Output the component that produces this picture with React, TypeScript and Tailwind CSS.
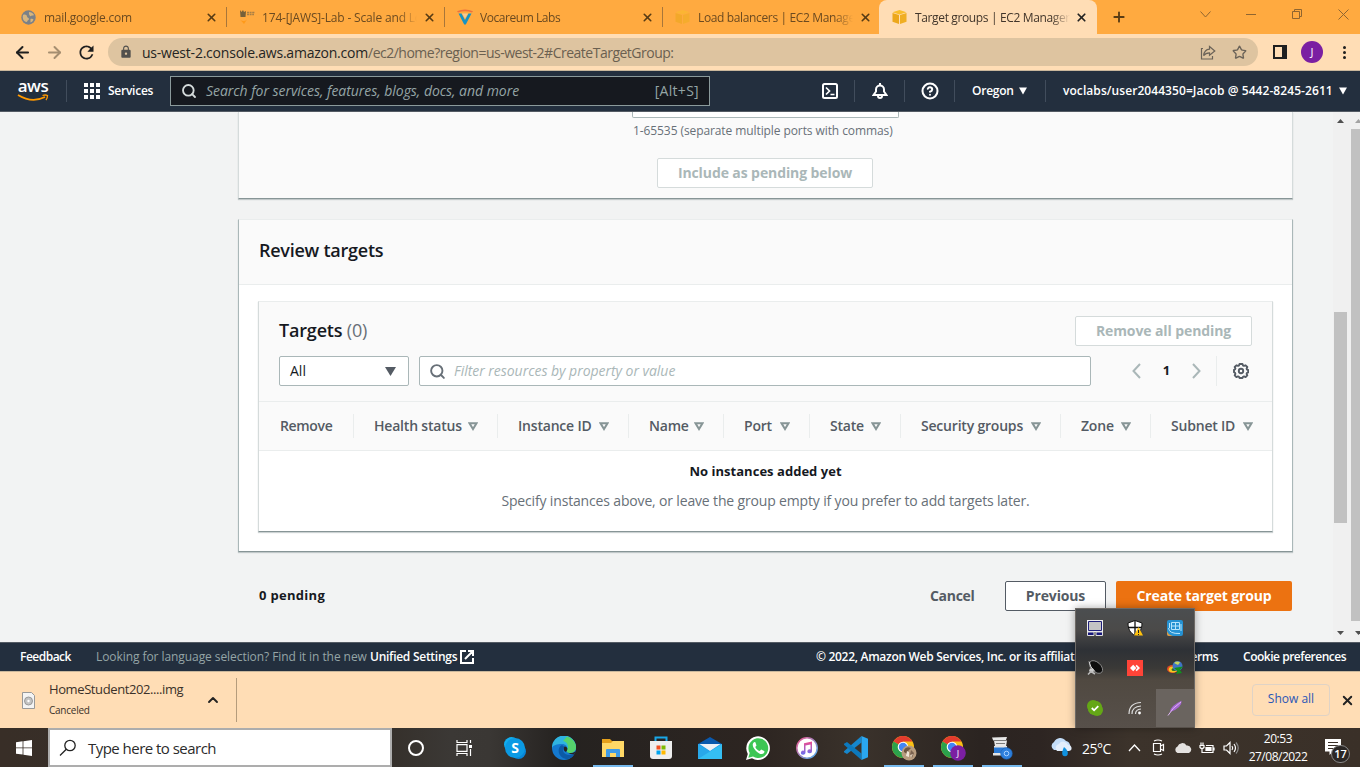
import React from "react";
import { ArrowLeft, ArrowRight, ChevronUp, CircleHelp, Plus, Search, Star, X } from "lucide-react";
import { MdLock, MdRefresh } from "react-icons/md";

const Cube = ({ faded = false }: { faded?: boolean }) => (
  <svg width="15" height="16" viewBox="0 0 15 16" className={faded ? "opacity-60" : ""}>
    <path d="M0.5 3.200 7.500 1l7 2.200-7 2.200z" fill="#f9bd2b" />
    <path d="M0.5 4 7 6v9L0.5 12.800z" fill="#eca71c" />
    <path d="M14.500 4 8 6v9l6.500-2.200z" fill="#f0ae22" />
  </svg>
);

const Globe = () => (
  <svg width="15" height="15" viewBox="0 0 15 15">
    <circle cx="7.500" cy="7.500" r="7.200" fill="#7c8187" />
    <path d="M2 5c2-1 4 0 4 1.500s2 1 2 2.500-2 1-2 3c-3 0-5-3-4-7z" fill="#d7b57e" />
    <path d="M8 2c2 0 4 1 5 3-1 1-2 0-3 1S7.500 4 8 2zM9.500 9c1-.6 2.500 0 3 .4-.6 1.500-1.600 2.600-3 3z" fill="#d7b57e" />
  </svg>
);

const Canvas = () => (
  <svg width="17" height="16" viewBox="0 0 17 16">
    <path d="M1 1l1.500 2L4 1l1 2 2-1-.5 6H1.500z" fill="#76603a" />
    <path d="M8 3.500h8M8 5.500h7" stroke="#a87f45" strokeWidth="1.400" strokeDasharray="2 .6" />
    <path d="M1 10.500q3.500 3 7 0L5 15z" fill="#ff9a1a" />
  </svg>
);

const VLogo = () => (
  <svg width="16" height="16" viewBox="0 0 16 16">
    <path d="M0 2.200q8-3.500 16 0l-1 1.300Q8 1 1 3.500z" fill="#f0703c" />
    <path d="M1.500 4.500h3L8 11l3.500-6.500h3L8.800 15.500H7.200z" fill="#1793c4" />
    <path d="M5 4.500h6L8 9.500z" fill="#f6c994" />
  </svg>
);

const tabs = [
  { title: "mail.google.com", icon: <Globe />, cls: "tracking-[-0.24px]" },
  { title: "174-[JAWS]-Lab - Scale and Lo", icon: <Canvas />, cls: "tracking-[-0.17px]" },
  { title: "Vocareum Labs", icon: <VLogo />, cls: "tracking-[-0.45px]" },
  { title: "Load balancers | EC2 Manage", icon: <Cube faded />, cls: "tracking-[-0.36px]" },
];

function TabStrip() {
  return (
    <div className="flex h-[34px] w-full bg-[#ffaa40] pl-[9px]">
      {tabs.map((t) => (
        <div key={t.title} className="flex h-[34px] w-[218px] items-center pl-3">
          <span className="flex w-[23px] shrink-0">{t.icon}</span>
          <span className="w-[155px] overflow-hidden whitespace-nowrap pt-px text-[12px] text-[#6b4a20] [mask-image:linear-gradient(to_right,black_88%,transparent)]">
            <span className={t.cls}>{t.title}</span>
          </span>
          <span className="flex w-[27px] justify-center pr-[3px]">
            <X size={13} strokeWidth={3} className="text-[#573b14]" />
          </span>
          <span className="h-5 w-px shrink-0 bg-[#a8763a]" />
        </div>
      ))}
      <div className="-ml-[2px] flex h-[34px] w-[218px] items-center rounded-t-lg bg-[#ffddb5] pl-[13px]">
        <span className="flex w-[23px] shrink-0"><Cube /></span>
        <span className="w-[155px] overflow-hidden whitespace-nowrap pt-px text-[12px] tracking-[-0.36px] text-[#41352a] [mask-image:linear-gradient(to_right,black_88%,transparent)]">
          Target groups | EC2 Manager
        </span>
        <span className="flex w-[22px] justify-center"><X size={13} strokeWidth={3.2} className="text-[#222]" /></span>
      </div>
      <span className="flex w-[43px] items-center justify-center"><Plus size={16} strokeWidth={2.8} className="text-[#5a3c14]" /></span>
      <div className="flex h-7 flex-1 items-center justify-end text-[#8f6530]">
        <span className="flex w-[46px] justify-center">
          <svg width="11" height="7" viewBox="0 0 11 7" fill="none" stroke="currentColor"><path d="M.5.5l5 5.500 5-5.500" /></svg>
        </span>
        <span className="flex w-[46px] justify-center"><span className="h-px w-[10px] bg-current" /></span>
        <span className="flex w-[46px] justify-center">
          <svg width="10" height="10" viewBox="0 0 10 10" fill="none" stroke="currentColor"><path d="M.5 2.500h7v7h-7zM2.500 2.500v-2h7v7h-2" /></svg>
        </span>
        <span className="flex w-[40px] justify-center pl-[6px]">
          <svg width="11" height="11" viewBox="0 0 11 11" stroke="currentColor"><path d="M.5.5l10 10M10.500.5l-10 10" /></svg>
        </span>
      </div>
    </div>
  );
}

function AddressBar() {
  return (
    <div className="flex h-[37px] w-full items-center border-b border-[#c9b79c] bg-[#ffddb5]">
      <span className="flex w-[44px] justify-center"><ArrowLeft size={19} strokeWidth={2.5} className="text-[#1f1f1f]" /></span>
      <span className="flex w-[20px] justify-center"><ArrowRight size={19} strokeWidth={2.5} className="shrink-0 text-[#a58e70]" /></span>
      <span className="flex w-[44px] justify-center"><MdRefresh size={21} className="text-[#1f1f1f]" /></span>
      <div className="flex h-7 w-[1150px] items-center rounded-full bg-[#dec4a0] pl-[11px]">
        <MdLock size={14} className="text-[#52504d]" />
        <span className="ml-[9px] flex-1 whitespace-nowrap text-[14px] tracking-[-0.22px] text-[#252423]">
          us-west-2.console.aws.amazon.com<span className="tracking-[-0.5px] text-[#6b6050]">/ec2/home?region=us-west-2#CreateTargetGroup:</span>
        </span>
        <svg width="16" height="15" viewBox="0 0 16 15" fill="none" stroke="#6b6358" strokeWidth="1.200">
          <path d="M3 3.500H1.500V14h11v-3M9.500 1.500 14.800 6l-5.300 4.300V7.800C7 7.800 5 8.600 3.600 10.600 4 7.500 6 4.500 9.500 4.200z" />
        </svg>
        <Star size={15} strokeWidth={2.2} className="ml-[16px] mr-[11px] text-[#6b6358]" />
      </div>
      <svg width="14" height="14" viewBox="0 0 14 14" className="ml-[15px]"><path d="M1 1h12v12H1z" fill="none" stroke="#1f1f1f" strokeWidth="2" /><path d="M9 1h4v12H9z" fill="#1f1f1f" /></svg>
      <span className="ml-[14px] flex h-[22px] w-[22px] items-center justify-center rounded-full bg-[#7b1fa2] text-[11px] text-white">J</span>
      <span className="ml-5 flex flex-col gap-[2px]">
        <i className="h-[3px] w-[3px] rounded-full bg-[#1f1f1f]" /><i className="h-[3px] w-[3px] rounded-full bg-[#1f1f1f]" /><i className="h-[3px] w-[3px] rounded-full bg-[#1f1f1f]" />
      </span>
    </div>
  );
}

const Sep = () => <span className="h-[22px] w-px shrink-0 bg-[#414d5c]" />;

const Caret = () => <svg width="8" height="8" viewBox="0 0 8 8"><path d="M0 .5h8L4 7.500z" fill="#fff" /></svg>;

function AwsNav() {
  return (
    <div className="flex h-[41px] w-full items-center border-b border-[#545b64] bg-[#232f3e] text-[12px] font-semibold text-white">
      <div className="flex w-[66px] flex-col items-center">
        <span className="h-[13px] text-[17px] font-semibold leading-[10px] tracking-[-0.5px]">aws</span>
        <svg width="32" height="8" viewBox="0 0 32 8" fill="none">
          <path d="M1 1q14 8.500 27 2" stroke="#f90" strokeWidth="1.800" />
          <path d="M25.500 1.500q3-1 5 0 0 2.500-1.500 4.500" stroke="#f90" strokeWidth="1.300" />
        </svg>
      </div>
      <Sep />
      <svg width="16" height="16" viewBox="0 0 16 16" fill="#fff" className="ml-[17px]">
        {[0, 6, 12].map((y) => [0, 6, 12].map((x) => <rect key={`${x}-${y}`} x={x} y={y} width="4" height="4" />))}
      </svg>
      <span className="ml-2 w-[62px] whitespace-nowrap tracking-[-0.25px]">Services</span>
      <div className="flex h-[30px] w-[540px] items-center border border-[#8b9a9b] bg-[#16191f] px-[10px] font-normal text-[#95a5a6]">
        <Search size={16} strokeWidth={2.8} className="text-[#d5dbdb]" />
        <span className="ml-[9px] flex-1 whitespace-nowrap pb-px text-[14px] italic tracking-[-0.04px]">Search for services, features, blogs, docs, and more</span>
        <span className="pb-px text-[14px] tracking-[0.3px]">[Alt+S]</span>
      </div>
      <span className="flex w-[144px] pl-[112px]">
        <svg width="16" height="16" viewBox="0 0 16 16" fill="none" stroke="#fff" strokeWidth="2"><rect x="1" y="1" width="14" height="14" rx="1.500" /><path d="M4 4.500 7.500 8 4 11.500M8.500 11.500h4" strokeWidth="1.700" /></svg>
      </span>
      <Sep />
      <span className="flex w-[49px] justify-center">
        <svg width="16" height="16" viewBox="0 0 16 16" fill="none" stroke="#fff" strokeWidth="2"><path d="M8 0v2M1.500 12h13L12 8.500V6.500a4 4 0 0 0-8 0v2zM6 13a2 2 0 0 0 4 0" /></svg>
      </span>
      <Sep />
      <span className="flex w-[49px] justify-center"><CircleHelp size={18} strokeWidth={2.7} /></span>
      <Sep />
      <span className="ml-[17px] flex w-[73px] items-center"><span className="w-[47px] tracking-[-0.25px]">Oregon</span><Caret /></span>
      <Sep />
      <span className="ml-[17px] flex items-center"><span className="w-[276px] whitespace-nowrap tracking-[0.07px]">voclabs/user2044350=Jacob @ 5442-8245-2611</span><Caret /></span>
    </div>
  );
}

const columns = ["Health status", "Instance ID", "Name", "Port", "State", "Security groups", "Zone", "Subnet ID"];

function Gear() {
  return (
    <svg width="16" height="16" viewBox="0 0 16 16" fill="none" stroke="#545b64" className="ml-[16px]">
      <path d="M6.500 1h3l.5 1.500 1 .4 1.600-.6 1.700 1.700-.7 1.600.4 1 1.200.4v2.400l-1.200.4-.4 1 .7 1.600-1.700 1.700-1.600-.7-1 .4L9.500 15h-3L6 13.800l-1-.4-1.600.7-1.700-1.700.7-1.600-.4-1L1 9.200V6.800l1-.4.4-1L1.700 4l1.700-1.700 1.600.6 1-.4z" strokeWidth="1.900" strokeLinejoin="round" />
      <circle cx="8" cy="8" r="2.200" strokeWidth="1.900" />
    </svg>
  );
}

function TargetsTable() {
  return (
    <div className="mx-[19px] mt-4 flex h-[231px] flex-col border border-[#d5dbdb] border-t-[#eaeded] border-b-[#879596] bg-white shadow-[0_1px_1px_rgba(0,28,36,0.2)]">
      <div className="h-[100px] border-b border-[#eaeded] bg-[#fafafa] px-5 pt-[14px]">
        <div className="flex h-[30px] items-center justify-between">
          <h3 className="pb-px text-[18px] font-semibold tracking-[-0.18px] text-[#16191f]">Targets <span className="font-normal text-[#687078]">(0)</span></h3>
          <button className="h-[30px] w-[177px] rounded-[2px] border border-[#d5dbdb] bg-white pb-[2px] text-[14px] font-bold tracking-[-0.1px] text-[#aab7b8]">Remove all pending</button>
        </div>
        <div className="mt-[10px] flex h-[30px] items-center">
          <div className="flex h-[30px] w-[130px] items-center justify-between rounded-[2px] border border-[#aab7b8] bg-white pl-[10px] pr-[12px] text-[14px] text-[#16191f]">
            <span className="pb-[2px]">All</span>
            <svg width="11" height="9" viewBox="0 0 11 9"><path d="M0 0h11L5.500 9z" fill="#545b64" /></svg>
          </div>
          <div className="ml-[10px] flex h-[30px] w-[672px] items-center rounded-[2px] border border-[#aab7b8] bg-white pl-[9px]">
            <Search size={17} strokeWidth={2.7} className="text-[#687078]" />
            <span className="ml-2 whitespace-nowrap pb-[2px] text-[14px] italic tracking-[-0.03px] text-[#aab7b8]">Filter resources by property or value</span>
          </div>
          <svg width="9" height="16" viewBox="0 0 9 16" fill="none" stroke="#aab7b8" strokeWidth="2" className="ml-[41px]"><path d="M8 1 1.500 8 8 15" /></svg>
          <span className="w-[51px] text-center text-[13px] font-bold text-[#16191f]">1</span>
          <svg width="9" height="16" viewBox="0 0 9 16" fill="none" stroke="#aab7b8" strokeWidth="2"><path d="M1 1 7.500 8 1 15" /></svg>
          <span className="ml-[15px] h-[30px] w-px bg-[#eaeded]" />
          <Gear />
        </div>
      </div>
      <div className="grid h-[49px] grid-cols-[95px_144px_131px_95px_86px_91px_160px_90px_121px] items-center border-b border-[#eaeded] bg-[#fafafa] text-[14px] font-semibold tracking-[-0.2px] text-[#545b64]">
        <span className="flex h-6 items-center border-r border-[#eaeded] pl-[21px]"><span className="pb-[2px] tracking-[-0.35px]">Remove</span></span>
        {columns.map((c) => (
          <span key={c} className="flex h-6 items-center justify-between whitespace-nowrap border-r border-[#eaeded] pl-5 pr-[19px] last:border-r-0">
            <span className="pb-[2px]">{c}</span>
            <svg width="10" height="9" viewBox="0 0 10 9" fill="none" stroke="#879596" strokeWidth="2"><path d="M1.500 1.200h7L5 7z" /></svg>
          </span>
        ))}
      </div>
      <div className="flex flex-1 flex-col items-center pt-[10px] text-[14px]">
        <b className="h-[30px] text-[13px] font-bold leading-5 tracking-[0.03px] text-[#16191f]">No instances added yet</b>
        <p className="whitespace-nowrap leading-5 tracking-[-0.16px] text-[#687078]">Specify instances above, or leave the group empty if you prefer to add targets later.</p>
      </div>
    </div>
  );
}

const Arrow = ({ down = false, color }: { down?: boolean; color: string }) => (
  <svg width="7" height="4" viewBox="0 0 7 4" className={down ? "rotate-180" : ""}><path d="M0 4 3.500 0 7 4z" fill={color} /></svg>
);

function Content() {
  return (
    <div className="flex h-[530px] w-full bg-[#f2f3f3]">
      <main className="w-[1333px] pl-[238px]">
        <section className="flex h-[87px] w-[1055px] flex-col border border-t-0 border-[#d5dbdb] border-b-[#879596] bg-[#fafafa] pl-[393px] shadow-[0_1px_1px_rgba(0,28,36,0.2)]">
          <div className="h-[6px] w-[267px] shrink-0 rounded-b-[2px] border border-t-0 border-[#aab7b8] bg-white" />
          <p className="mt-[4px] h-[18px] whitespace-nowrap pl-px text-[12px] leading-[18px] tracking-[-0.09px] text-[#687078]">1-65535 (separate multiple ports with commas)</p>
          <button className="ml-[25px] mt-[18px] h-[30px] w-[216px] shrink-0 rounded-[2px] border border-[#d5dbdb] bg-white pb-[2px] text-[14px] font-bold tracking-[-0.1px] text-[#aab7b8]">Include as pending below</button>
        </section>
        <section className="mt-5 h-[333px] w-[1055px] border border-[#aab7b8] border-t-[#eaeded] border-b-[#879596] bg-white shadow-[0_1px_1px_rgba(0,28,36,0.2)]">
          <h2 className="flex h-[65px] items-center border-b border-[#eaeded] bg-[#fafafa] pb-[4px] pl-5 text-[18px] font-semibold tracking-[-0.25px] text-[#16191f]">Review targets</h2>
          <TargetsTable />
        </section>
        <div className="mt-[29px] flex h-[30px] w-[1054px] items-center text-[14px] font-bold tracking-[-0.15px] text-[#545b64]">
          <span className="flex-1 pl-[21px] text-[13px] tracking-[0.3px] text-[#16191f]">0 pending</span>
          <span className="w-[75px] pb-[2px] tracking-[-0.3px]">Cancel</span>
          <button className="h-[30px] w-[101px] rounded-[2px] border border-[#545b64] bg-white pb-[2px]">Previous</button>
          <button className="ml-[10px] h-[30px] w-[176px] rounded-[2px] bg-[#ec7211] pb-[2px] text-white">Create target group</button>
        </div>
      </main>
      <div className="flex w-[15px] flex-col items-center bg-[#f0f0f0] pt-[7px]">
        <Arrow color="#505050" />
        <div className="mt-[189px] h-[211px] w-[13px] bg-[#c1c1c1]" />
        <div className="mt-[108px]"><Arrow down color="#505050" /></div>
      </div>
      <div className="flex w-[12px] flex-col items-end overflow-hidden bg-[#f0f0f0] pt-[7px]">
        <div className="-mr-[2px]"><Arrow color="#a3a3a3" /></div>
        <div className="mt-[6px] h-[492px] w-[9px] shrink-0 bg-[#c1c1c1]" />
        <div className="-mr-[2px] mt-[10px]"><Arrow down color="#505050" /></div>
      </div>
    </div>
  );
}

function Footer() {
  return (
    <div className="flex h-[29px] w-full items-center border-t border-[#545b64] bg-[#232f3e] pl-5 text-[12px] font-semibold text-white">
      <span className="w-[76px] tracking-[-0.5px]">Feedback</span>
      <span className="w-[274px] whitespace-nowrap font-normal tracking-[-0.07px] text-[#95a5a6]">Looking for language selection? Find it in the new</span>
      <span className="w-[90px] whitespace-nowrap tracking-[-0.27px]">Unified Settings</span>
      <svg width="14" height="14" viewBox="0 0 14 14" fill="none" stroke="#fff" strokeWidth="2"><path d="M6 1H1v12h12V8M8 1h5v5M13 1 5 9" /></svg>
      <span className="ml-[342px] w-[368px] whitespace-nowrap tracking-[-0.3px]">© 2022, Amazon Web Services, Inc. or its affiliates.</span>
      <span className="w-[59px] tracking-[-0.4px]">Terms</span>
      <span className="whitespace-nowrap tracking-[-0.48px]">Cookie preferences</span>
    </div>
  );
}

function Downloads() {
  return (
    <div className="flex h-[57px] w-full items-center border-t border-[#c9b79c] bg-[#ffddb5] pl-[22px]">
      <svg width="13" height="17" viewBox="0 0 13 17"><path d="M.5.5h9l3 3v13H.5z" fill="#f4f4f4" stroke="#999" /><circle cx="6.500" cy="9" r="4" fill="#c4c4c4" stroke="#999" /><circle cx="6.500" cy="9" r="1.200" fill="#fff" /></svg>
      <div className="ml-[14px] flex w-[152px] flex-col">
        <span className="h-[20px] whitespace-nowrap text-[13px] leading-[18px] tracking-[-0.4px] text-[#3b3129]">HomeStudent202....img</span>
        <span className="text-[10px] leading-[20px] tracking-[-0.25px] text-[#3b3129]">Canceled</span>
      </div>
      <ChevronUp size={16} strokeWidth={2.8} className="ml-[4px] text-[#222]" />
      <span className="ml-[15px] h-[44px] w-px bg-[#b59c7c]" />
      <span className="ml-auto flex h-[32px] w-[78px] items-center justify-center rounded-[4px] border border-[#dfd3c6] pb-[2px] text-[12px] text-[#2a56b5]">Show all</span>
      <X size={15} strokeWidth={3} className="ml-[10px] mr-[5px] text-[#222]" />
    </div>
  );
}

const Chrome = ({ badge }: { badge: React.ReactNode }) => (
  <svg width="26" height="26" viewBox="0 0 26 26">
    <circle cx="12" cy="12" r="11" fill="#fbc116" />
    <path d="M12 12 2.500 6.500A11 11 0 0 1 21.500 6.500H12z" fill="#e33b2e" />
    <path d="M2.500 6.500A11 11 0 0 0 12 23l5-8.500-5-2.500z" fill="#2ba24c" />
    <circle cx="12" cy="12" r="5.300" fill="#fff" /><circle cx="12" cy="12" r="4.200" fill="#4285f4" />
    {badge}
  </svg>
);

const apps: { name: string; open?: boolean; icon: React.ReactNode }[] = [
  { name: "skype", icon: (
    <svg width="24" height="24" viewBox="0 0 24 24"><circle cx="8.500" cy="8.500" r="7.500" fill="#12aef0" /><circle cx="15.500" cy="15.500" r="7.500" fill="#0786d8" /><circle cx="12" cy="12" r="10" fill="#0b9ae4" /><text x="12" y="17" textAnchor="middle" fontSize="14" fontWeight="700" fill="#fff">S</text></svg>
  ) },
  { name: "edge", icon: (
    <svg width="24" height="24" viewBox="0 0 24 24">
      <circle cx="12" cy="12" r="12" fill="#1479cf" />
      <path d="M0 12A12 12 0 0 1 24 11c0 4-3 6-6 6s-4-1.500-3-3 0-6-5-6C5 8 1 9 0 12z" fill="#2fb4e0" />
      <path d="M15 .5c5 1.500 9 5.500 9 10.500 0 4-3 6-6 6s-4-1.500-3-3c2-3 1-8-4-9z" fill="#55d36c" />
      <path d="M10 9c-5 2-5 12 4 14 4 0 7-2 8-5-4 2-10 1-11-3-.4-2 .5-3 1.500-4z" fill="#0c5aa6" />
      <path d="M12.500 10.500c-1.500 2-1 4.500 1.500 5.500l1.200-2c.8-2-.7-3.500-2.700-3.500z" fill="#26211f" />
      <path d="M15.500 16.500q4 1.500 8-1l-1.300 3q-4 0-6.700-2z" fill="#26211f" />
    </svg>
  ) },
  { name: "explorer", open: true, icon: (
    <svg width="22" height="20" viewBox="0 0 22 20"><path d="M0 1h8l2 2h12v4H0z" fill="#e5a01b" /><path d="M0 5h9l2-2h11v16H0z" fill="#ffd866" /><path d="M4 19v-7a1 1 0 0 1 1-1h12a1 1 0 0 1 1 1v7h-4v-4H8v4z" fill="#3f9be6" /></svg>
  ) },
  { name: "store", icon: (
    <svg width="24" height="24" viewBox="0 0 24 24"><path d="M6.500 6V1.500h11V6" fill="none" stroke="#19a7e8" strokeWidth="2" /><path d="M1 5h22v15q0 3-3 3H4q-3 0-3-3z" fill="#eee" /><path d="M7.500 9.500h4v4h-4z" fill="#f25022" /><path d="M12.500 9.500h4v4h-4z" fill="#7fba00" /><path d="M7.500 14.500h4v4h-4z" fill="#00a4ef" /><path d="M12.500 14.500h4v4h-4z" fill="#ffb900" /></svg>
  ) },
  { name: "mail", icon: (
    <svg width="24" height="22" viewBox="0 0 24 22"><path d="M0 7 12 0l12 7z" fill="#0a59ad" /><path d="M0 7h24v15H0z" fill="#1e9ae8" /><path d="M1.500 7h21L12 14z" fill="#eef1f6" /><path d="M0 7l12 7.500L24 7v15H0z" fill="#28a8ea" /><path d="M24 7 0 22h24z" fill="#35bff3" /></svg>
  ) },
  { name: "whatsapp", icon: (
    <svg width="24" height="24" viewBox="0 0 24 24"><path d="M0 24l1.800-6A11.800 11.800 0 1 1 6 22.300z" fill="#fff" /><path d="M2.300 21.800 3.700 17A9.900 9.900 0 1 1 7 20.500z" fill="#3dc654" /><path d="M8.500 6c-3 1.500-2 5.500 1.500 9s7 4.300 8.500 1l-.3-1-3-1.400-1.500 1.500c-2-.7-3.500-2.200-4.400-4.200L10.500 9.500 9.400 6.300z" fill="#fff" /></svg>
  ) },
  { name: "itunes", icon: (
    <svg width="22" height="22" viewBox="0 0 22 22">
      <defs><linearGradient id="tune" x1="0" y1="0" x2="0" y2="1"><stop offset="0" stopColor="#ef4b8e" /><stop offset="1" stopColor="#6a6ff0" /></linearGradient><linearGradient id="ring" x1="0" y1="0" x2="1" y2="1"><stop offset="0" stopColor="#f2588f" /><stop offset="1" stopColor="#4fb4f4" /></linearGradient></defs>
      <circle cx="11" cy="11" r="10.200" fill="#fff" stroke="url(#ring)" strokeWidth="1.500" />
      <path d="M8 6.200 16 4.500v9.700a2.300 2 0 1 1-1.500-1.800V7.500L9.500 8.600v7a2.300 2 0 1 1-1.500-1.800z" fill="url(#tune)" />
    </svg>
  ) },
  { name: "vscode", icon: (
    <svg width="24" height="24" viewBox="0 0 24 24"><path d="M17.500 0v6.500L3 18 0 16.300v-1z" fill="#1687cd" /><path d="M17.500 24v-6.500L3 6 0 7.700v1z" fill="#0d79bd" /><path d="M17.500 0 24 2.800v18.400L17.500 24z" fill="#2aa7f0" /></svg>
  ) },
  { name: "chrome", open: true, icon: <Chrome badge={<g><circle cx="18" cy="18" r="7.500" fill="#b79c7f" /><path d="M13 15q2-4 7-2l-3 3 1 2-2 1-3-2z" fill="#6d5540" /><path d="M16 16l2 1v5l-3-1z" fill="#efe5d6" /><path d="M20 15l3 3-2 5-2-3z" fill="#7a6250" /><path d="M19 20l3-1-2 4z" fill="#d8c7b3" /></g>} /> },
  { name: "chrome-j", open: true, icon: <Chrome badge={<g><circle cx="18" cy="18" r="7.800" fill="#7b1fa2" /><text x="18" y="21.500" textAnchor="middle" fontSize="9" fill="#fff">J</text></g>} /> },
  { name: "installer", open: true, icon: (
    <svg width="22" height="24" viewBox="0 0 22 24"><path d="M1 1.500 16 1l-1 3H2zM3 4.500h13l-1 6H4z" fill="#e8e8e8" /><path d="M2 4.500h13M5 7.500h9" stroke="#7b7b7b" /><path d="M3 10h13l1 8H3z" fill="#2a7ad6" /><path d="M3 10h13v1.500H3zM2 17h13v2.500H2z" fill="#e4e4e4" /><circle cx="15.500" cy="17.500" r="5.800" fill="#2d7fdc" stroke="#1c5fae" strokeWidth=".6" /><circle cx="15.500" cy="17.500" r="2.300" fill="none" stroke="#a9d1ff" /></svg>
  ) },
];

function Taskbar() {
  return (
    <div className="flex h-[39px] w-full items-center bg-[linear-gradient(to_right,#382e27_0px,#35302b_390px,#3b3835_450px,#3a3734_490px,#252220_560px,#2d2521_760px,#3a322b_860px,#2b2421_980px,#2d2522_1040px,#3c332b_1130px,#3a3028_1360px)] text-white">
      <span className="flex w-[48px] justify-center">
        <svg width="16" height="16" viewBox="0 0 16 16" fill="#fff"><path d="M0 2.200 6.600 1.300v6.200H0zM7.400 1.200 16 0v7.500H7.400zM0 8.300h6.600v6.300L0 13.700zM7.400 8.300H16V16l-8.600-1.300z" /></svg>
      </span>
      <div className="flex h-[39px] w-[344px] items-center border-2 border-[#adadad] bg-white pl-[9px]">
        <svg width="18" height="18" viewBox="0 0 18 18" fill="none" stroke="#222" strokeWidth="1.300"><circle cx="11" cy="6.500" r="5.200" /><path d="M7.300 10.300 1 16.500" /></svg>
        <span className="ml-[11px] whitespace-nowrap pt-[2px] text-[15px] tracking-[-0.53px] text-[#2b2b2b]">Type here to search</span>
      </div>
      <span className="flex w-[48px] justify-center"><span className="h-4 w-4 rounded-full border-2 border-white" /></span>
      <span className="flex w-[48px] justify-center">
        <svg width="17" height="16" viewBox="0 0 17 16" fill="none" stroke="#fff" strokeWidth="1.200"><path d="M1 0v2.500h10V0M1 16v-2.500h10V16M1 4.600h10v6.800H1zM14.500 0v3M14.500 9v7" /><path d="M13 5h3v3h-3z" fill="#fff" stroke="none" /></svg>
      </span>
      <div className="ml-[3px] grid h-[39px] w-[535px] grid-cols-11">
        {apps.map((a) => (
          <span key={a.name} className="flex flex-col items-center">
            <span className="flex h-[37px] items-center pt-[3px]">{a.icon}</span>
            {a.open && <span className="h-[2px] w-10 bg-[#76b9ed]" />}
          </span>
        ))}
      </div>
      <svg width="24" height="22" viewBox="0 0 24 22" className="ml-[23px]"><path d="M5 13a4.500 4.500 0 0 1 0-8 7 7 0 0 1 12-1 5 5 0 0 1 2 9z" fill="#c3ddf8" /><path d="M8 14a4 4 0 0 1 2-7 5 5 0 0 1 9 1 3 3 0 0 1 1 6z" fill="#e3eefb" /><path d="M15 10q5 4 3.500 8a3 3 0 0 1-5 0q-1-3 1.500-8z" fill="#0f91df" /></svg>
      <span className="ml-[9px] w-[46px] whitespace-nowrap pt-px text-[14px] tracking-[-0.5px]">25°C</span>
      <svg width="13" height="8" viewBox="0 0 13 8" fill="none" stroke="#fff" strokeWidth="1.300"><path d="M1 7l5.500-6L12 7" /></svg>
      <svg width="14" height="17" viewBox="0 0 14 17" fill="none" stroke="#fff" strokeWidth="1.200" className="ml-[11px]"><path d="M1.500 4.500h7v8h-7zM8.500 7l3-1.500v6L8.500 10M2 2q4-2 8 0M2 15q4 2 8 0" /></svg>
      <svg width="18" height="12" viewBox="0 0 18 12" className="ml-[8px]"><path d="M3.500 11a3.500 3.500 0 0 1 0-6.500 5 5 0 0 1 9-1A4 4 0 0 1 15 11z" fill="#e4e2e0" /></svg>
      <svg width="16" height="12" viewBox="0 0 16 12" fill="none" stroke="#fff" strokeWidth="1.200" className="ml-[7px]"><path d="M5 10.500h9v-7H7M15 5.500v3M1 3.500h4v2q-2 2-4 0zM2 3.500v-3M4 3.500v-3M3 6.500v4h2" /><path d="M7 5.500h5v3H7z" fill="#fff" /></svg>
      <svg width="17" height="14" viewBox="0 0 17 14" fill="none" stroke="#fff" strokeWidth="1.200" className="ml-[8px]"><path d="M1 5h2.500L7 1.500v11L3.500 9H1zM9 5q1.500 2 0 4M11 3q3 4 0 8" /><path d="M13 1.500q4.500 5.500 0 11" stroke="#888" /></svg>
      <span className="ml-[8px] flex w-[60px] flex-col items-center whitespace-nowrap text-[12px] leading-[18px]"><span className="tracking-[-0.4px]">20:53</span><span className="tracking-[-0.5px]">27/08/2022</span></span>
      <span className="relative ml-[17px] h-[27px] w-[26px]">
        <svg width="17" height="17" viewBox="0 0 17 17" className="mt-[5px]"><path d="M0 0h16v12.500H8L4.500 16v-3.500H0z" fill="#fff" /><path d="M3 3.500h10M3 6.500h10M3 9.500h6" stroke="#3a3028" /></svg>
        <span className="absolute left-[6px] top-[11px] flex h-[18px] w-[19px] items-center justify-center rounded-full border border-[#888] bg-[#2b2725] text-[11px] font-semibold">17</span>
      </span>
    </div>
  );
}

const trayIcons: React.ReactNode[] = [
  <svg key="pc" width="16" height="16" viewBox="0 0 16 16"><path d="M0 0h16v12H0z" fill="#f0f0f0" /><path d="M1.500 1.500h13v9h-13z" fill="#c4c4c4" stroke="#20207a" /><path d="M.5 12h6.500v3.500H.5zM9 12h6.500v3.500H9z" fill="#17177a" stroke="#ddd" /></svg>,
  <svg key="shield" width="16" height="16" viewBox="0 0 16 16"><path d="M8 .5 15 3c0 6-2 10-7 12.500C3 13 1 9 1 3z" fill="#fff" stroke="#111" /><path d="M8 1v14M1 7.500h13" stroke="#111" strokeWidth="1.300" /><path d="M11.500 7 16 15.500H7z" fill="#ffc20e" /><path d="M11.500 10v3M11.500 14v1" stroke="#222" /></svg>,
  <svg key="gfx" width="16" height="16" viewBox="0 0 16 16"><rect width="16" height="16" rx="2" fill="#2592d3" /><path d="M4.500 2.500h8v7h-8zM4.500 6h8M8.500 2.500v7M1.500 8Q2 14 13 13.500M2.500 3v5M14 4v7" fill="none" stroke="#b7e4fb" /><path d="M0 11q1 4 6 5H2q-2 0-2-2z" fill="#e59a3c" /></svg>,
  <svg key="dish" width="16" height="16" viewBox="0 0 16 16"><ellipse cx="9" cy="7" rx="7.800" ry="4.800" transform="rotate(42 9 7)" fill="#0d0d0d" stroke="#999" strokeWidth=".8" /><path d="M2 1.500q1 6 6 10" stroke="#ddd" fill="none" /><circle cx="4.500" cy="10.500" r="2.300" fill="#ccc" /><path d="M1 14.500l3-3 4 2.500" stroke="#bbb" strokeWidth="1.500" fill="none" /></svg>,
  <svg key="any" width="16" height="16" viewBox="0 0 16 16"><path d="M0 0h16v16H0z" fill="#ff4438" /><path d="M6.200 4.800 9.400 8l-3.200 3.200L3 8zM9.700 4.800 13 8l-3.300 3.200-1.200-1.200 2-2-2-2z" fill="#fff" /></svg>,
  <svg key="idm" width="16" height="16" viewBox="0 0 16 16"><ellipse cx="5.500" cy="9" rx="5.500" ry="4" fill="#e34b24" /><ellipse cx="6" cy="9.500" rx="4.300" ry="3" fill="#f2c922" /><ellipse cx="7" cy="9.500" rx="2.500" ry="1.600" fill="#2b6a2e" /><circle cx="10.500" cy="6" r="5" fill="#3f74c4" /><path d="M7 3q3-2.500 6-.5l-2 2.500z" fill="#c5d45e" /><path d="M7 8l9-1.500L13 10l2 3-6 1 1.500-3z" fill="#12901f" /></svg>,
  <svg key="ok" width="16" height="16" viewBox="0 0 16 16"><circle cx="6" cy="6" r="6" fill="#64a716" /><circle cx="10" cy="10" r="6" fill="#64a716" /><circle cx="8" cy="8" r="7.300" fill="#64a716" /><path d="M4.800 8l2.300 2.300 4.200-4.200" fill="none" stroke="#fff" strokeWidth="1.800" /></svg>,
  <svg key="wifi" width="14" height="14" viewBox="0 0 14 14" fill="none" stroke="#ddd" strokeWidth="1.200"><path d="M1 13Q1 2 13 1.500M4 13q0-7.500 9-8M7.500 13q0-4.500 5.500-5" /><circle cx="11.500" cy="12" r="1.400" fill="#fff" stroke="none" /></svg>,
  <svg key="feather" width="16" height="16" viewBox="0 0 16 16"><path d="M3 12Q3 6 14.500.8 15 4 12 7t-9 5z" fill="#a766d3" /><path d="M1 15.500Q5 8 14 2" stroke="#dcb6f2" fill="none" /></svg>,
];

function TrayPopup() {
  return (
    <div className="absolute left-[1075px] top-[608px] grid h-[120px] w-[120px] grid-cols-3 grid-rows-3 bg-[linear-gradient(to_bottom,#4b4e50_0px,#4b4a49_22px,#2e3136_42px,#3a3937_60px,#504941_72px,#57504a_120px)] shadow-[inset_1px_1px_#6e6a66,inset_-1px_0_#6e6a66,0_0_8px_rgba(0,0,0,0.35)]">
      {trayIcons.map((icon, i) => (
        <span key={i} className="m-px flex items-center justify-center last:bg-[#6a645f]">{icon}</span>
      ))}
    </div>
  );
}

export default function App() {
  return (
    <div className="relative flex h-[767px] w-[1360px] flex-col overflow-hidden font-['Open_Sans','Noto_Sans',sans-serif]">
      <TabStrip />
      <AddressBar />
      <AwsNav />
      <Content />
      <Footer />
      <Downloads />
      <Taskbar />
      <TrayPopup />
    </div>
  );
}
